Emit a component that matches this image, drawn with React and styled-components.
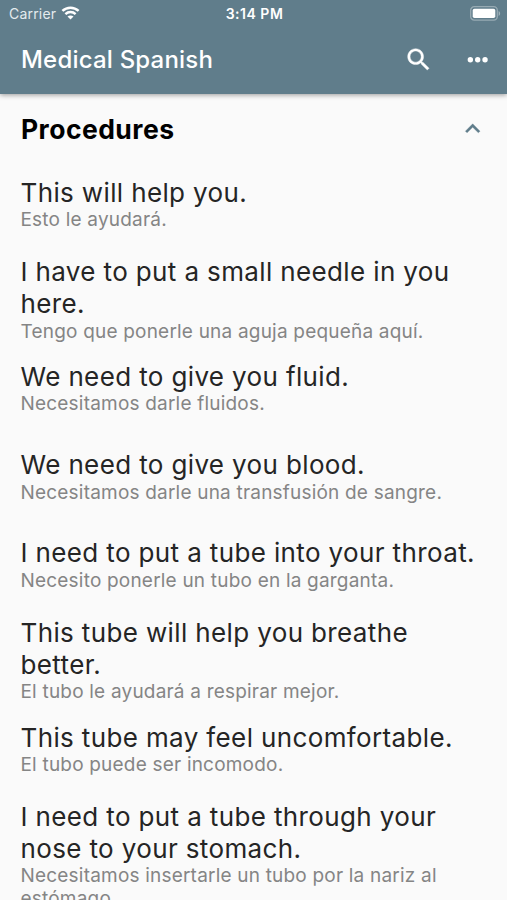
import React, { useState } from 'react'
import styled, { createGlobalStyle } from 'styled-components';

const phrases = [
  { english: "This will help you.", spanish: "Esto le ayudará." },
  { english: "I have to put a small needle in you here.", spanish: "Tengo que ponerle una aguja pequeña aquí.", tall: true },
  { english: "We need to give you fluid.", spanish: "Necesitamos darle fluidos." },
  { english: "We need to give you blood.", spanish: "Necesitamos darle una transfusión de sangre." },
  { english: "I need to put a tube into your throat.", spanish: "Necesito ponerle un tubo en la garganta." },
  { english: "This tube will help you breathe better.", spanish: "El tubo le ayudará a respirar mejor.", tall: true },
  { english: "This tube may feel uncomfortable.", spanish: "El tubo puede ser incomodo." },
  { english: "I need to put a tube through your nose to your stomach.", spanish: "Necesitamos insertarle un tubo por la nariz al estómago.", tall: true },
];

function WifiIcon() {
  return (
    <svg width="19" height="14" viewBox="0 0 18 14" fill="none" stroke="#fff" strokeWidth="2.5">
      <path d="M.9 4.900C5.500.6 12.500.6 17.100 4.900" />
      <path d="M3.900 8.100c2.900-2.700 7.300-2.700 10.200 0" />
      <path d="M9 13.600 6 10.600c1.600-1.600 4.400-1.600 6 0z" fill="#fff" stroke="none" />
    </svg>
  )
}

function BatteryIcon() {
  return (
    <svg width="31" height="15" viewBox="0 0 31 15">
      <rect x=".7" y=".7" width="26.600" height="13.400" rx="3.600" fill="none" stroke="#fff" strokeOpacity=".35" strokeWidth="1.300" />
      <rect x="2.700" y="2.700" width="22.600" height="9.400" rx="1.800" fill="#fff" />
      <path d="M28.600 5c2 .9 2 4 0 4.900z" fill="#fff" fillOpacity=".4" />
    </svg>
  )
}

function SearchIcon() {
  return (
    <svg width="29.400" height="29.400" viewBox="0 0 24 24" fill="#fff" stroke="#fff" strokeWidth=".3">
      <path d="M15.500 14h-.79l-.28-.27C15.410 12.590 16 11.110 16 9.500 16 5.910 13.090 3 9.500 3S3 5.910 3 9.500 5.910 16 9.500 16c1.610 0 3.090-.59 4.230-1.570l.27.28v.79l5 4.990L20.490 19l-4.990-5zm-6 0C7.010 14 5 11.990 5 9.500S7.010 5 9.500 5 14 7.010 14 9.500 11.990 14 9.500 14z" />
    </svg>
  )
}

function MoreIcon() {
  return (
    <svg width="29.400" height="29.400" viewBox="0 0 24 24" fill="#fff">
      <circle cx="6" cy="12" r="2.200" />
      <circle cx="12" cy="12" r="2.200" />
      <circle cx="18" cy="12" r="2.200" />
    </svg>
  )
}

function ChevronIcon() {
  return (
    <svg width="29.400" height="29.400" viewBox="0 0 24 24" fill="#607d8b" stroke="#607d8b" strokeWidth=".25">
      <path d="M12 8l-6 6 1.410 1.410L12 10.830l4.590 4.580L18 14z" />
    </svg>
  )
}

export default function App() {

    const [open, setOpen] = useState(true);

    return (
      <>
        <GlobalStyle />
        <Screen>
          <Header>
            <StatusBar>
              <Carrier>Carrier <WifiIcon /></Carrier>
              <Clock>3:14 PM</Clock>
              <Battery><BatteryIcon /></Battery>
            </StatusBar>
            <Toolbar>
              <h1>Medical Spanish</h1>
              <IconButton aria-label="Search"><SearchIcon /></IconButton>
              <IconButton aria-label="More"><MoreIcon /></IconButton>
            </Toolbar>
          </Header>
          <SectionHeader onClick={() => setOpen(!open)}>
            <h2>Procedures</h2>
            <Arrow $open={open}><ChevronIcon /></Arrow>
          </SectionHeader>
          {open && (
            <div>
              {phrases.map((phrase) => (
                <Phrase key={phrase.english} $tall={phrase.tall}>
                  <English>{phrase.english}</English>
                  <Spanish>{phrase.spanish}</Spanish>
                </Phrase>
              ))}
            </div>
          )}
        </Screen>
      </>
    )
};

const GlobalStyle = createGlobalStyle`
  * {
    box-sizing: border-box;
    margin: 0;
  }
  body {
    background-color: #fafafa;
    font-family: Inter, "Liberation Sans", sans-serif;
    overflow: hidden;
  }
`;

const Screen = styled.div`
  height: 100vh;
  overflow: hidden;
  background-color: #fafafa;
`;

const Header = styled.header`
  height: 93.5px;
  background-color: #607d8b;
  color: #fff;
  box-shadow: 0 1px 5px rgba(0, 0, 0, 0.4);
`;

const StatusBar = styled.div`
  display: grid;
  grid-template-columns: 1fr auto 1fr;
  align-items: center;
  height: 26px;
  padding: 0 6px 0 9px;
`;

const Carrier = styled.div`
  display: flex;
  align-items: center;
  gap: 5px;
  font-size: 14px;
  letter-spacing: 0.2px;
  color: #e4ebee;
`;

const Clock = styled.div`
  padding-right: 1px;
  font-size: 14px;
  font-weight: 600;
  letter-spacing: 0.5px;
`;

const Battery = styled.div`
  display: flex;
  justify-content: flex-end;
`;

const Toolbar = styled.div`
  display: flex;
  align-items: center;
  height: 67px;
  padding-left: 21px;
  h1 {
    flex: 1;
    font-size: 24px;
    font-weight: 500;
    letter-spacing: 0.2px;
  }
`;

const IconButton = styled.button`
  display: flex;
  align-items: center;
  justify-content: center;
  width: 59px;
  height: 59px;
  padding: 0;
  border: none;
  background: none;
  cursor: pointer;
`;

const SectionHeader = styled.div`
  display: flex;
  justify-content: space-between;
  align-items: center;
  height: 70px;
  padding: 0 20px 0 21px;
  cursor: pointer;
  h2 {
    font-size: 26.5px;
    font-weight: 700;
    letter-spacing: 0.45px;
    color: #000;
  }
`;

const Arrow = styled.span`
  display: flex;
  transform: ${({ $open }) => ($open ? "none" : "rotate(180deg)")};
`;

const Phrase = styled.div`
  height: ${({ $tall }) => ($tall ? "95.9px" : "88.2px")};
  padding: ${({ $tall }) => ($tall ? "4.5px" : "13.5px")} 20.5px 0;
`;

const English = styled.p`
  font-size: 26px;
  line-height: 32px;
  letter-spacing: 0.37px;
  color: #252525;
`;

const Spanish = styled.p`
  padding-top: 0.4px;
  font-size: 19px;
  line-height: 22.5px;
  letter-spacing: 0.2px;
  color: #858585;
`;
